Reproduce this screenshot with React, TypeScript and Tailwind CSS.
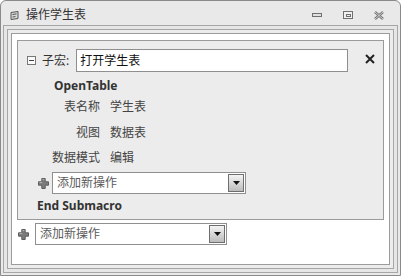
const FONT = { fontFamily: '"Segoe UI", "Noto Sans", "Noto Sans CJK SC", sans-serif' };

function PlusIcon() {
  return (
    <svg width="11" height="11" viewBox="0 0 11 11">
      <path
        d="M3.8 0.5h3.4v3.3h3.3v3.4h-3.3v3.3h-3.4v-3.3h-3.3v-3.4h3.3z"
        fill="#7c7c7c"
        stroke="#5e5e5e"
        strokeWidth="1"
      />
      <path d="M4.6 1.6h1.8M1.6 4.6h2.6" stroke="#bdbdbd" strokeWidth="0.9" fill="none" />
    </svg>
  );
}

function Dropdown({ width }: { width: number }) {
  return (
    <div
      className="flex h-[22px] items-stretch border border-[#8f8f8f] bg-white"
      style={{ width }}
    >
      <span className="flex-1 pl-[4px] text-[12px] leading-[20px] text-[#5a5a5a]">添加新操作</span>
      <div className="m-[1px] flex w-[16px] items-center justify-center border border-[#6e6e6e] bg-gradient-to-b from-[#f4f4f4] to-[#bcbcbc]">
        <svg width="7" height="4" viewBox="0 0 7 4">
          <path d="M0 0h7l-3.5 4z" fill="#111" />
        </svg>
      </div>
    </div>
  );
}

function PropRow({ label, value }: { label: string; value: string }) {
  return (
    <div className="flex h-[26px] items-center text-[12px] text-[#444]">
      <span className="w-[82px] text-right">{label}</span>
      <span className="ml-[10px]">{value}</span>
    </div>
  );
}

export default function App() {
  return (
    <div
      className="flex h-[276px] w-[401px] flex-col rounded-t-[6px] border border-[#8a8a8a] bg-[#e9e9e9]"
      style={FONT}
    >
      {/* Title bar */}
      <div className="flex h-[24px] shrink-0 items-center pl-[8px] pr-[16px]">
        <svg width="11" height="11" viewBox="0 0 11 11" className="mt-[4px]">
          <path d="M2 2.5l7-1v7l-7 1z" fill="#d8d8d8" stroke="#555" strokeWidth="1" />
          <path d="M3.5 4.5l4-0.6M3.5 7l3-0.4" stroke="#555" strokeWidth="1" />
        </svg>
        <span className="ml-[6px] mt-[4px] text-[12px] text-[#333]">操作学生表</span>
        <div className="ml-auto mt-[4px] flex items-center gap-[21px]">
          <div className="h-[4px] w-[10px] border border-[#707070] bg-[#e0e0e0]" />
          <div className="flex h-[8px] w-[10px] items-center justify-center border border-[#707070] bg-[#f0f0f0]">
            <div className="h-[3px] w-[5px] border border-[#707070]" />
          </div>
          <svg width="10" height="9" viewBox="0 0 10 9">
            <path d="M1 1l8 7M9 1l-8 7" stroke="#707070" strokeWidth="2.4" />
            <path d="M1 1l8 7M9 1l-8 7" stroke="#e8e8e8" strokeWidth="0.8" />
          </svg>
        </div>
      </div>

      {/* Frames */}
      <div className="flex flex-1 flex-col px-[2px] pb-[2px]">
        <div className="flex flex-1 flex-col border border-[#a6a6a6] bg-[#e6e6e6] p-[3px]">
          <div className="flex flex-1 flex-col border border-[#a6a6a6] bg-[#ececec] p-[3px]">
            <div className="flex flex-1 flex-col border border-[#9c9c9c] bg-white px-[5px] pt-[6px]">
              {/* Submacro block */}
              <div className="flex h-[180px] flex-col border border-[#9a9a9a] bg-[#ececec] pb-[5px]">
                <div className="mt-[8px] flex items-center">
                  <svg width="9" height="9" viewBox="0 0 9 9" className="ml-[9px]">
                    <rect x="0.5" y="0.5" width="8" height="8" fill="#fafafa" stroke="#777" />
                    <path d="M2 4.5h5" stroke="#444" strokeWidth="1" />
                  </svg>
                  <span className="ml-[6px] text-[12px] text-[#333]">子宏:</span>
                  <div className="ml-[7px] flex h-[23px] w-[272px] items-center border border-[#8f8f8f] bg-white pl-[3px] text-[12px] text-[#111]">
                    打开学生表
                  </div>
                  <svg width="10" height="10" viewBox="0 0 10 10" className="ml-[17px] mb-[4px]">
                    <path d="M1 1l8 8M9 1l-8 8" stroke="#222" strokeWidth="2" />
                  </svg>
                </div>
                <div className="ml-[36px] mt-[6px] h-[16px] text-[12px] font-bold leading-[16px] text-[#333]">
                  OpenTable
                </div>
                <PropRow label="表名称" value="学生表" />
                <PropRow label="视图" value="数据表" />
                <PropRow label="数据模式" value="编辑" />
                <div className="mt-[1px] flex items-center">
                  <div className="ml-[20px] w-[14px]">
                    <PlusIcon />
                  </div>
                  <Dropdown width={194} />
                </div>
                <div className="ml-[19px] mt-[4px] text-[12px] font-bold leading-[16px] text-[#333]">
                  End Submacro
                </div>
              </div>
              {/* Bottom add action */}
              <div className="mt-[3px] flex items-center">
                <div className="ml-[1px] w-[17px]">
                  <PlusIcon />
                </div>
                <Dropdown width={192} />
              </div>
            </div>
          </div>
        </div>
      </div>
    </div>
  );
}
